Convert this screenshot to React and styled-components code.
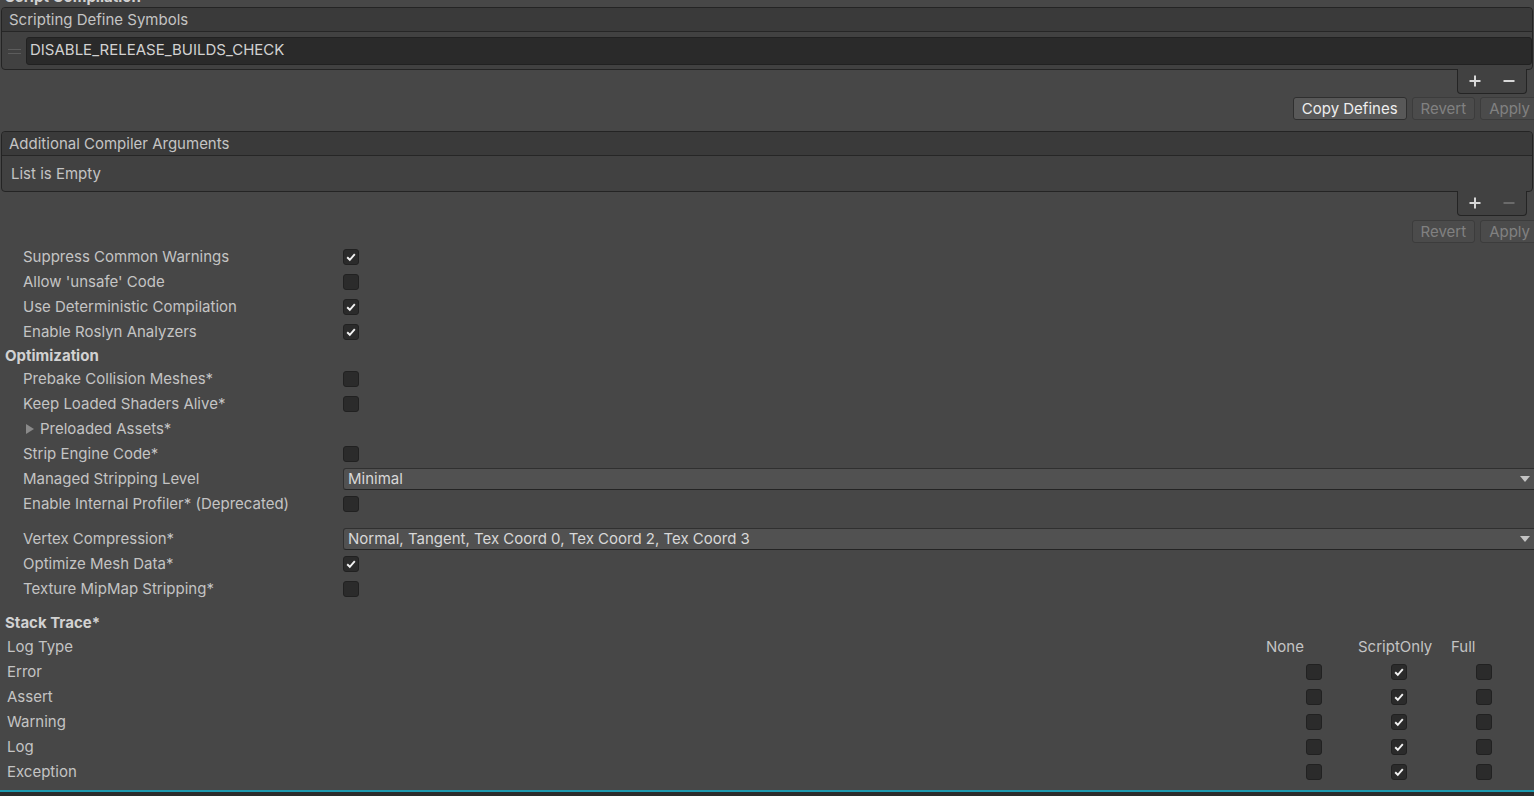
import styled, { createGlobalStyle } from "styled-components";

const GlobalStyle = createGlobalStyle`
  html, body {
    margin: 0;
    padding: 0;
    background: #474747;
    overflow: hidden;
  }
  body {
    font-family: Inter, "Noto Sans", sans-serif;
    font-size: 15px;
    color: #c4c4c4;
  }
`;

const Page = styled.div`
  width: 1534px;
  height: 796px;
  display: flex;
  flex-direction: column;
  overflow: hidden;
`;

const Content = styled.div`
  flex: 1;
  display: flex;
  flex-direction: column;
  overflow: hidden;
`;

const SectionTitle = styled.div`
  height: 20px;
  line-height: 20px;
  margin-top: -13px;
  padding-left: 5px;
  font-weight: 700;
  color: #d2d2d2;
  flex-shrink: 0;
`;

const ListBox = styled.div`
  margin-left: 1px;
  margin-right: 1px;
  border: 1px solid #242424;
  border-radius: 4px;
  background: #414141;
  flex-shrink: 0;
`;

const ListHeader = styled.div`
  height: 23px;
  line-height: 23px;
  padding-left: 7px;
  background: #3a3a3a;
  border-bottom: 1px solid #262626;
  border-radius: 4px 4px 0 0;
`;

const ListBody = styled.div`
  display: flex;
  align-items: center;
  gap: 5px;
  padding: ${(p) => (p.$empty ? "0 9px" : "5px 0 4px 6px")};
  height: ${(p) => (p.$empty ? "35px" : "auto")};
`;

const DragHandle = styled.div`
  width: 13px;
  display: flex;
  flex-direction: column;
  gap: 3px;
  &::before, &::after {
    content: "";
    height: 1px;
    background: #5c5c5c;
  }
`;

const TextField = styled.div`
  flex: 1;
  height: 26px;
  line-height: 24px;
  padding-left: 3px;
  background: #2a2a2a;
  border: 1px solid #212121;
  border-radius: 3px;
  color: #d2d2d2;
`;

const ListFooter = styled.div`
  display: flex;
  justify-content: flex-end;
  padding-right: 7px;
  flex-shrink: 0;
`;

const FooterTab = styled.div`
  position: relative;
  margin-top: -1px;
  width: 68px;
  height: 24px;
  display: flex;
  background: #414141;
  border: 1px solid #242424;
  border-top: none;
  border-radius: 0 0 4px 4px;
`;

const TabButton = styled.div`
  flex: 1;
  display: flex;
  align-items: center;
  justify-content: center;
`;

const ButtonRow = styled.div`
  display: flex;
  justify-content: flex-end;
  gap: 5px;
  margin-top: ${(p) => p.$top}px;
  margin-right: -5px;
  flex-shrink: 0;
`;

const Button = styled.div`
  height: 21px;
  line-height: 21px;
  padding: 0 8px;
  border: 1px solid ${(p) => (p.$disabled ? "#3c3c3c" : "#2f2f2f")};
  border-radius: 3px;
  background: ${(p) => (p.$disabled ? "#4b4b4b" : "#585858")};
  color: ${(p) => (p.$disabled ? "#818181" : "#eeeeee")};
`;

const Spacer = styled.div`
  height: ${(p) => p.$h}px;
  flex-shrink: 0;
`;

const Row = styled.div`
  display: grid;
  grid-template-columns: 343px 1fr;
  align-items: center;
  height: 25px;
  flex-shrink: 0;
`;

const Label = styled.div`
  padding-left: 23px;
  display: flex;
  align-items: center;
  gap: 6px;
  white-space: nowrap;
`;

const Foldout = styled.span`
  width: 0;
  height: 0;
  margin-left: 3px;
  border-top: 5px solid transparent;
  border-bottom: 5px solid transparent;
  border-left: 8px solid #8a8a8a;
`;

const GroupHeader = styled.div`
  height: 22px;
  line-height: ${(p) => (p.$low ? 24 : 22)}px;
  padding-left: 5px;
  font-weight: 700;
  color: #d2d2d2;
  flex-shrink: 0;
`;

const Box = styled.div`
  width: 14px;
  height: 14px;
  border: 1px solid #212121;
  border-radius: 3px;
  background: #2b2b2b;
  display: flex;
  align-items: center;
  justify-content: center;
`;

const Popup = styled.div`
  height: 20px;
  margin-right: -3px;
  display: flex;
  align-items: center;
  justify-content: space-between;
  padding: 0 6px 0 4px;
  background: #515151;
  border: 1px solid #303030;
  border-bottom-color: #242424;
  border-radius: 3px;
  color: #d8d8d8;
`;

const PopupArrow = styled.span`
  width: 0;
  height: 0;
  border-left: 5px solid transparent;
  border-right: 5px solid transparent;
  border-top: 6px solid #c4c4c4;
`;

const TraceRow = styled.div`
  display: flex;
  align-items: center;
  height: 25px;
  padding-right: ${(p) => (p.$head ? 0 : 8)}px;
  flex-shrink: 0;
`;

const TraceLabel = styled.div`
  flex: 1;
  padding-left: 7px;
`;

const TraceHead = styled.div`
  width: ${(p) => p.$w}px;
`;

const TraceCell = styled.div`
  width: 85px;
  display: flex;
  justify-content: center;
`;

const BottomLine = styled.div`
  height: 4px;
  border-top: 2px solid #1d9ab0;
  background: #2c2c2c;
  flex-shrink: 0;
`;

const Check = ({ on }) => (
  <Box>
    {on && (
      <svg width="12" height="12" viewBox="0 0 12 12">
        <path d="M2.2 6.3 L4.8 8.8 L9.8 3.2" fill="none" stroke="#f2f2f2" strokeWidth="1.9" />
      </svg>
    )}
  </Box>
);

const ListFooterTab = ({ minusDisabled }) => (
  <ListFooter>
    <FooterTab>
      <TabButton>
        <svg width="12" height="12" viewBox="0 0 12 12">
          <path d="M6 0.5V11.5M0.5 6H11.5" stroke="#d8d8d8" strokeWidth="2" />
        </svg>
      </TabButton>
      <TabButton>
        <svg width="12" height="12" viewBox="0 0 12 12">
          <path d="M0.5 6H11.5" stroke={minusDisabled ? "#6a6a6a" : "#d8d8d8"} strokeWidth="2" />
        </svg>
      </TabButton>
    </FooterTab>
  </ListFooter>
);

const toggles = [
  ["Suppress Common Warnings", true],
  ["Allow 'unsafe' Code", false],
  ["Use Deterministic Compilation", true],
  ["Enable Roslyn Analyzers", true],
];

const logTypes = ["Error", "Assert", "Warning", "Log", "Exception"];

const App = () => {
  return (
    <Page>
      <GlobalStyle />
      <Content>
        <SectionTitle>Script Compilation</SectionTitle>

        <ListBox>
          <ListHeader>Scripting Define Symbols</ListHeader>
          <ListBody>
            <DragHandle />
            <TextField>DISABLE_RELEASE_BUILDS_CHECK</TextField>
          </ListBody>
        </ListBox>
        <ListFooterTab />
        <ButtonRow $top={3}>
          <Button>Copy Defines</Button>
          <Button $disabled>Revert</Button>
          <Button $disabled>Apply</Button>
        </ButtonRow>

        <Spacer $h={11} />
        <ListBox>
          <ListHeader>Additional Compiler Arguments</ListHeader>
          <ListBody $empty>List is Empty</ListBody>
        </ListBox>
        <ListFooterTab minusDisabled />
        <ButtonRow $top={4}>
          <Button $disabled>Revert</Button>
          <Button $disabled>Apply</Button>
        </ButtonRow>

        <Spacer $h={1} />
        {toggles.map(([name, on]) => (
          <Row key={name}>
            <Label>{name}</Label>
            <Check on={on} />
          </Row>
        ))}

        <GroupHeader $low>Optimization</GroupHeader>
        <Row>
          <Label>Prebake Collision Meshes*</Label>
          <Check />
        </Row>
        <Row>
          <Label>Keep Loaded Shaders Alive*</Label>
          <Check />
        </Row>
        <Row>
          <Label>
            <Foldout />
            Preloaded Assets*
          </Label>
        </Row>
        <Row>
          <Label>Strip Engine Code*</Label>
          <Check />
        </Row>
        <Row>
          <Label>Managed Stripping Level</Label>
          <Popup>
            Minimal
            <PopupArrow />
          </Popup>
        </Row>
        <Row>
          <Label>Enable Internal Profiler* (Deprecated)</Label>
          <Check />
        </Row>
        <Spacer $h={10} />
        <Row>
          <Label>Vertex Compression*</Label>
          <Popup>
            Normal, Tangent, Tex Coord 0, Tex Coord 2, Tex Coord 3
            <PopupArrow />
          </Popup>
        </Row>
        <Row>
          <Label>Optimize Mesh Data*</Label>
          <Check on />
        </Row>
        <Row>
          <Label>Texture MipMap Stripping*</Label>
          <Check />
        </Row>

        <Spacer $h={11} />
        <GroupHeader>Stack Trace*</GroupHeader>
        <TraceRow $head>
          <TraceLabel>Log Type</TraceLabel>
          <TraceHead $w={92}>None</TraceHead>
          <TraceHead $w={93}>ScriptOnly</TraceHead>
          <TraceHead $w={83}>Full</TraceHead>
        </TraceRow>
        {logTypes.map((t) => (
          <TraceRow key={t}>
            <TraceLabel>{t}</TraceLabel>
            <TraceCell>
              <Check />
            </TraceCell>
            <TraceCell>
              <Check on />
            </TraceCell>
            <TraceCell>
              <Check />
            </TraceCell>
          </TraceRow>
        ))}
      </Content>
      <BottomLine />
    </Page>
  );
};

export default App;
